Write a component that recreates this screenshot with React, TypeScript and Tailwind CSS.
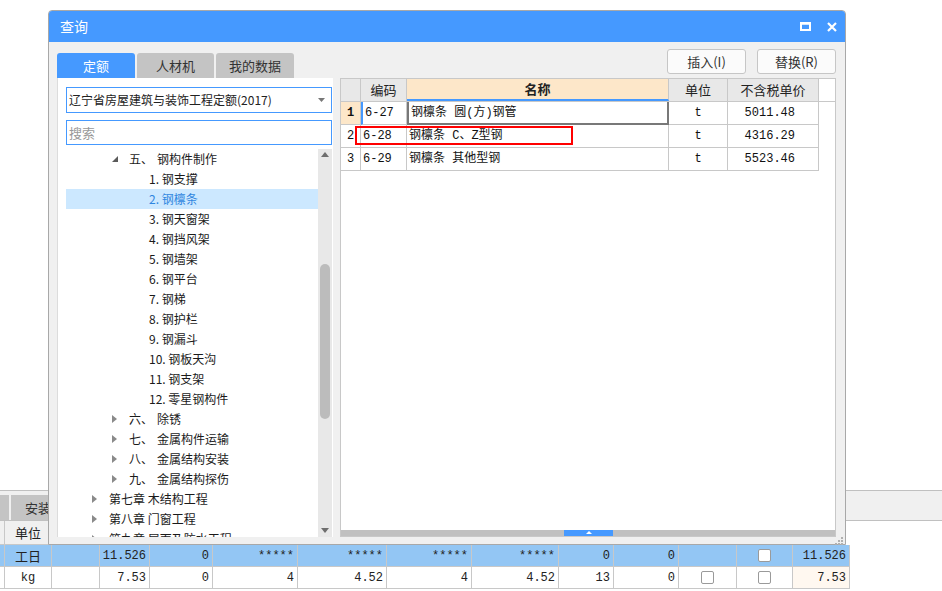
import React from "react";

/* FONTS */
const cn = "font-['Noto_Sans_CJK_SC',sans-serif]";
const mono = "font-['Liberation_Mono','Noto_Sans_CJK_SC',monospace]";

/* DATA */
type TreeRow = { kind: "sec" | "chap" | "leaf"; label: string; name?: string; open?: boolean; selected?: boolean };

const tree: TreeRow[] = [
    { kind: "sec", label: "五、", name: "钢构件制作", open: true },
    { kind: "leaf", label: "1. 钢支撑" },
    { kind: "leaf", label: "2. 钢檩条", selected: true },
    { kind: "leaf", label: "3. 钢天窗架" },
    { kind: "leaf", label: "4. 钢挡风架" },
    { kind: "leaf", label: "5. 钢墙架" },
    { kind: "leaf", label: "6. 钢平台" },
    { kind: "leaf", label: "7. 钢梯" },
    { kind: "leaf", label: "8. 钢护栏" },
    { kind: "leaf", label: "9. 钢漏斗" },
    { kind: "leaf", label: "10. 钢板天沟" },
    { kind: "leaf", label: "11. 钢支架" },
    { kind: "leaf", label: "12. 零星钢构件" },
    { kind: "sec", label: "六、", name: "除锈" },
    { kind: "sec", label: "七、", name: "金属构件运输" },
    { kind: "sec", label: "八、", name: "金属结构安装" },
    { kind: "sec", label: "九、", name: "金属结构探伤" },
    { kind: "chap", label: "第七章 木结构工程" },
    { kind: "chap", label: "第八章 门窗工程" },
    { kind: "chap", label: "第九章 屋面及防水工程" },
];

const quotas = [
    { no: "1", code: "6-27", name: "钢檩条 圆(方)钢管", unit: "t", price: "5011.48" },
    { no: "2", code: "6-28", name: "钢檩条 C、Z型钢", unit: "t", price: "4316.29" },
    { no: "3", code: "6-29", name: "钢檩条 其他型钢", unit: "t", price: "5523.46" },
];

/* SMALL PARTS */
function Closed() {
    return (
        <svg width="5" height="8" viewBox="0 0 5 8">
            <path d="M0 0 L5 4 L0 8 Z" fill="#8a8a8a" />
        </svg>
    );
}

function Open() {
    return (
        <svg width="6" height="6" viewBox="0 0 6 6">
            <path d="M6 0 L6 6 L0 6 Z" fill="#5a5a5a" />
        </svg>
    );
}

function Check() {
    return <div className="w-[13px] h-[13px] bg-white border border-[#9a9a9a] rounded-[2px]" />;
}

/* BACKGROUND TABLE */
const bgCols = "grid grid-cols-[5px_47px_48px_50px_63px_85px_89px_85px_87px_55px_65px_58px_56px_57px_1fr]";

function BgRow({ cells, blue }: { cells: React.ReactNode[]; blue?: boolean }) {
    return (
        <div className={`${bgCols} h-[22px] text-[12px] text-[#222] ${mono}`}>
            {cells.map((c, i) => {
                const centered = i === 1 || i === 11 || i === 12;
                const bg = i === 14 ? "bg-white border-r-0 border-b-0" : blue ? "bg-[#93c6f4]" : i === 13 ? "bg-[#fff8f0]" : "bg-white";
                return (
                    <div
                        key={i}
                        className={`flex items-center border-r border-b border-[#c8c8c8] ${bg} ${centered ? "justify-center" : "justify-end pr-[3px]"}`}
                    >
                        {c}
                    </div>
                );
            })}
        </div>
    );
}

/* COMPONENT */
export default function App() {
    return (
        <div className={`w-[942px] h-[591px] relative overflow-hidden bg-white ${cn}`}>
            {/* BACKGROUND APP */}
            <div className="flex flex-col h-full">
                <div className="h-[490px]" />
                <div className="h-[31px] bg-[#f0f0f0] border-t border-b border-[#c0c0c0] flex items-end">
                    <div className="w-[9px] h-[25px] bg-[#c4c4c4]" />
                    <div className="ml-[2px] w-[80px] h-[25px] bg-[#c4c4c4] flex items-center pl-[14px] text-[13px] text-[#333]">安装</div>
                </div>
                <div className={`${bgCols} h-[24px] text-[13px] text-[#222]`}>
                    <div className="bg-[#f0f0f0] border-r border-b border-[#c8c8c8]" />
                    <div className="bg-[#f0f0f0] border-r border-b border-[#c8c8c8] flex items-center justify-center">单位</div>
                </div>
                <BgRow
                    blue
                    cells={["", <span className={cn + " text-[13px]"}>工日</span>, "", "11.526", "0", "*****", "*****", "*****", "*****", "0", "0", "", <Check />, "11.526", ""]}
                />
                <BgRow cells={["", "kg", "", "7.53", "0", "4", "4.52", "4", "4.52", "13", "0", <Check />, <Check />, "7.53", ""]} />
            </div>

            {/* DIALOG */}
            <div className="absolute left-[48px] top-[10px] w-[798px] h-[535px] bg-[#f0f0f0] border border-[#a8a8a8] rounded-t-[4px] flex flex-col">
                {/* TITLE BAR */}
                <div className="h-[31px] bg-[#4599ff] rounded-t-[3px] flex items-center justify-between pl-[11px] pr-[8px] shrink-0">
                    <span className="text-white text-[14px]">查询</span>
                    <div className="flex items-center gap-[16px]">
                        <svg width="11" height="9" viewBox="0 0 11 9">
                            <rect x="1" y="1.5" width="9" height="6.5" fill="none" stroke="white" strokeWidth="2" />
                            <rect x="0" y="0" width="11" height="2.5" fill="white" />
                        </svg>
                        <svg width="10" height="10" viewBox="0 0 10 10">
                            <path d="M1 1 L9 9 M9 1 L1 9" stroke="white" strokeWidth="2.2" />
                        </svg>
                    </div>
                </div>

                {/* BODY */}
                <div className="flex-1 flex flex-col pl-[8px] pr-[9px]">
                    {/* TABS + BUTTONS */}
                    <div className="h-[36px] flex justify-between shrink-0">
                        <div className="flex items-end gap-[2px] text-[13px]">
                            <div className="w-[78px] h-[25px] bg-[#4599ff] text-white rounded-t-[3px] flex items-center justify-center">定额</div>
                            <div className="w-[77px] h-[25px] bg-[#c4c4c4] text-[#333] rounded-t-[3px] flex items-center justify-center">人材机</div>
                            <div className="w-[78px] h-[25px] bg-[#c4c4c4] text-[#333] rounded-t-[3px] flex items-center justify-center">我的数据</div>
                        </div>
                        <div className="flex gap-[11px] mt-[7px] h-[25px] text-[13px] text-[#333]">
                            <button className="w-[79px] h-[25px] bg-[#fbfbfb] border border-[#c6c6c6] rounded-[3px]">插入(I)</button>
                            <button className="w-[79px] h-[25px] bg-[#fbfbfb] border border-[#c6c6c6] rounded-[3px]">替换(R)</button>
                        </div>
                    </div>

                    {/* CONTENT */}
                    <div className="h-[459px] flex gap-[7px]">
                        {/* LEFT PANEL */}
                        <div className="w-[276px] bg-white border-l border-[#dcdcdc] flex flex-col pl-[8px] pr-[1px] pt-[9px]">
                            <div className="h-[26px] border border-[#4599ff] flex items-center justify-between pl-[2px] pr-[6px] text-[12px] text-[#222]">
                                <span>辽宁省房屋建筑与装饰工程定额(2017)</span>
                                <svg width="7" height="4" viewBox="0 0 7 4">
                                    <path d="M0 0 L7 0 L3.5 4 Z" fill="#777" />
                                </svg>
                            </div>
                            <div className="mt-[7px] h-[25px] border border-[#4599ff] flex items-center pl-[2px] text-[13px] text-[#999]">搜索</div>
                            <div className="mt-[4px] flex-1 flex overflow-hidden">
                                <div className="flex-1 overflow-hidden">
                                    {tree.map((r, i) => (
                                        <div
                                            key={i}
                                            className={`h-[20px] flex items-center text-[12px] ${r.selected ? "bg-[#cce8ff] text-[#2f86e0]" : "text-[#1a1a1a]"}`}
                                        >
                                            {r.kind === "leaf" && <div className="w-[83px] shrink-0" />}
                                            {r.kind === "sec" && (
                                                <>
                                                    <div className="w-[46px] shrink-0" />
                                                    <div className="w-[17px] shrink-0 flex items-center">{r.open ? <Open /> : <Closed />}</div>
                                                    <span className="w-[28px] shrink-0">{r.label}</span>
                                                </>
                                            )}
                                            {r.kind === "chap" && (
                                                <>
                                                    <div className="w-[26px] shrink-0" />
                                                    <div className="w-[17px] shrink-0 flex items-center">
                                                        <Closed />
                                                    </div>
                                                </>
                                            )}
                                            <span className="whitespace-nowrap">{r.kind === "sec" ? r.name : r.label}</span>
                                        </div>
                                    ))}
                                </div>
                                {/* SCROLLBAR */}
                                <div className="w-[14px] bg-[#e8e8e8] flex flex-col items-center">
                                    <svg className="mt-[3px]" width="8" height="5" viewBox="0 0 8 5">
                                        <path d="M0 5 L4 0 L8 5 Z" fill="#6e6e6e" />
                                    </svg>
                                    <div className="mt-[107px] w-[10px] h-[155px] rounded-full bg-[#bcbcbc]" />
                                    <div className="flex-1" />
                                    <svg className="mb-[4px]" width="8" height="5" viewBox="0 0 8 5">
                                        <path d="M0 0 L8 0 L4 5 Z" fill="#6e6e6e" />
                                    </svg>
                                </div>
                            </div>
                        </div>

                        {/* RIGHT GRID */}
                        <div className="flex-1 bg-white border border-[#c8c8c8] flex flex-col">
                            <div className="flex-1">
                                <div className="flex h-[23px] text-[13px] text-[#222] border-b border-[#c8c8c8]">
                                    <div className="w-[20px] bg-[#e8e8e8] border-r border-[#c8c8c8]" />
                                    <div className="w-[46px] bg-[#e8e8e8] border-r border-[#c8c8c8] flex items-center justify-center">编码</div>
                                    <div className="w-[262px] bg-[#fde7c9] border-r border-b-2 border-r-[#c8c8c8] border-b-[#4599ff] flex items-center justify-center font-bold">名称</div>
                                    <div className="w-[59px] bg-[#e8e8e8] border-r border-[#c8c8c8] flex items-center justify-center">单位</div>
                                    <div className="w-[91px] bg-[#e8e8e8] border-r border-[#c8c8c8] flex items-center justify-center">不含税单价</div>
                                </div>
                                {quotas.map((q, i) => (
                                    <div key={q.no} className={`flex h-[23px] text-[12px] text-[#111] ${mono}`}>
                                        <div
                                            className={`w-[20px] border-r border-b border-[#c8c8c8] flex items-center justify-center ${
                                                i === 0 ? "bg-[#fde7c9] font-bold" : "bg-white"
                                            }`}
                                        >
                                            {q.no}
                                        </div>
                                        <div
                                            className={`w-[46px] border-r border-b border-[#c8c8c8] flex items-center pl-[2px] ${
                                                i === 0 ? "border-l-2 border-l-[#4599ff]" : ""
                                            }`}
                                        >
                                            {q.code}
                                        </div>
                                        <div
                                            className={`w-[262px] flex items-center pl-[2px] ${
                                                i === 0 ? "border-2 border-t-0 border-[#787878]" : "border-r border-b border-[#c8c8c8]"
                                            }`}
                                        >
                                            {q.name}
                                        </div>
                                        <div className="w-[59px] border-r border-b border-[#c8c8c8] flex items-center justify-center">{q.unit}</div>
                                        <div className="w-[91px] border-r border-b border-[#c8c8c8] flex items-center justify-end pr-[23px]">{q.price}</div>
                                    </div>
                                ))}
                            </div>
                            {/* H SCROLLBAR */}
                            <div className="h-[6px] bg-[#c0c0c0] flex">
                                <div className="w-[223px]" />
                                <div className="w-[49px] bg-[#4599ff] flex items-start justify-center">
                                    <svg className="mt-[1px]" width="6" height="3" viewBox="0 0 6 3">
                                        <path d="M0 3 L3 0 L6 3 Z" fill="white" />
                                    </svg>
                                </div>
                            </div>
                        </div>
                    </div>

                    {/* FOOTER */}
                    <div className="flex-1 flex justify-end items-end pb-[2px] -mr-[7px]">
                        <svg width="8" height="8" viewBox="0 0 8 8">
                            <rect x="6" y="0" width="2" height="2" fill="#b0b0b0" />
                            <rect x="3" y="3" width="2" height="2" fill="#b0b0b0" />
                            <rect x="6" y="3" width="2" height="2" fill="#b0b0b0" />
                            <rect x="0" y="6" width="2" height="2" fill="#b0b0b0" />
                            <rect x="3" y="6" width="2" height="2" fill="#b0b0b0" />
                            <rect x="6" y="6" width="2" height="2" fill="#b0b0b0" />
                        </svg>
                    </div>
                </div>
            </div>

            {/* RED MARK */}
            <div className="absolute left-[355px] top-[126px] w-[218px] h-[19px] border-2 border-[#ff0000]" />
        </div>
    );
}
